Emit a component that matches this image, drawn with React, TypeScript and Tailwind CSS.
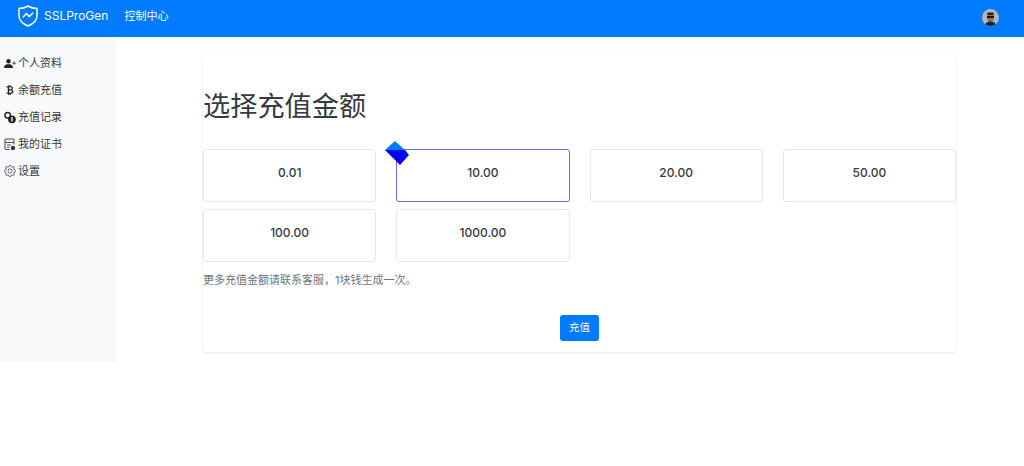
import React from "react";
import { BsCurrencyBitcoin, BsGear, BsPersonPlusFill } from "react-icons/bs";

function Shield() {
  return (
    <svg width="20" height="22" viewBox="0 0 20 22" fill="none" stroke="white" strokeWidth="1.5" strokeLinejoin="round" strokeLinecap="round">
      <path d="M10 1 C12.5 2.6 15.5 3.4 19 3.6 V10.5 C19 15.5 15 19 10 21 C5 19 1 15.5 1 10.5 V3.6 C4.5 3.4 7.5 2.6 10 1 Z" />
      <path d="M5.2 12 L8.4 8.6 L11.4 11.6 L14.8 8" />
    </svg>
  );
}

function Coins() {
  return (
    <svg width="13" height="13" viewBox="0 0 13 13">
      <circle cx="4" cy="4" r="3" fill="none" stroke="#212529" strokeWidth="1.6" />
      <circle cx="8.6" cy="8.4" r="4.2" fill="#212529" />
      <rect x="7.9" y="6" width="1.4" height="4.8" fill="#fff" />
    </svg>
  );
}

function Cert() {
  return (
    <svg width="12" height="13" viewBox="0 0 12 13" fill="none" stroke="#495057" strokeWidth="1.1">
      <rect x="1" y="1" width="9" height="3.5" rx="1" />
      <path d="M5.5 11.5 H2 A1 1 0 0 1 1 10.5 V4.5 M10 4.5 V6.5" />
      <path d="M3 7 H7 M3 9.2 H5.5" />
      <circle cx="9" cy="10" r="2.2" fill="#343a40" stroke="none" />
    </svg>
  );
}

function Avatar() {
  return (
    <svg width="17" height="17" viewBox="0 0 17 17">
      <defs>
        <clipPath id="av"><circle cx="8.5" cy="8.5" r="8.5" /></clipPath>
      </defs>
      <g clipPath="url(#av)">
        <rect width="17" height="17" fill="#b5b5b9" />
        <ellipse cx="8.5" cy="8.4" rx="3.6" ry="4.4" fill="#8a7367" />
        <rect x="5.2" y="3.4" width="6.6" height="2.6" rx="1.2" fill="#26262a" />
        <rect x="5" y="7" width="7" height="2" fill="#141416" />
        <path d="M3 17 C3 13.6 6 12.6 8.5 12.6 C11 12.6 14 13.6 14 17 Z" fill="#20212a" />
      </g>
    </svg>
  );
}

function Diamond() {
  return (
    <svg className="absolute left-[-12px] top-[-10px]" width="25" height="26" viewBox="0 0 25 26">
      <polygon points="0,10 10,1 20,10" fill="#007bff" />
      <polygon points="0,10 20,10 24,15 15,25" fill="#0000f0" />
    </svg>
  );
}

const menu: [React.ReactNode, string][] = [
  [<BsPersonPlusFill className="h-[13px] w-[13px] text-[#212529]" />, "个人资料"],
  [<BsCurrencyBitcoin className="h-[12px] w-[12px] text-[#212529]" />, "余额充值"],
  [<Coins />, "充值记录"],
  [<Cert />, "我的证书"],
  [<BsGear className="h-[12px] w-[12px] text-[#495057]" />, "设置"],
];

const amounts = ["0.01", "10.00", "20.00", "50.00", "100.00", "1000.00"];

export default function App() {
  return (
    <div className="min-h-[466px] bg-white font-['Inter','Noto_Sans_CJK_SC',sans-serif] text-[#212529]">
      <header className="flex h-[37px] items-center bg-[#007bff] pb-[6px] pl-[18px] pr-[25px] text-white">
        <Shield />
        <span className="ml-[6px] text-[12px] leading-none">SSLProGen</span>
        <span className="ml-[16px] mt-[2px] text-[11px] leading-none">控制中心</span>
        <span className="ml-auto mt-[3px] flex"><Avatar /></span>
      </header>
      <div className="flex">
        <aside className="flex h-[325px] w-[116px] shrink-0 flex-col gap-[9px] bg-[#f8f9fa] pl-[4px] pt-[17px]">
          {menu.map(([icon, label]) => (
            <div key={label} className="flex h-[18px] items-center gap-[2px] text-[11px] text-[#343a40]">
              <span className="flex w-[12px] justify-center">{icon}</span>
              <span>{label}</span>
            </div>
          ))}
        </aside>
        <main className="ml-[87px] mt-[18px] h-[297px] w-[753px] rounded-[4px] bg-white shadow-[0_1px_3px_rgba(0,0,0,0.1)]">
          <h1 className="mt-[34px] text-[27.2px] font-normal leading-[36px] text-[#343a40]">选择充值金额</h1>
          <div className="mt-[24px] grid grid-cols-4 gap-x-[20px] gap-y-[7px]">
            {amounts.map((a, i) => (
              <div
                key={a}
                className={
                  i === 1
                    ? "relative flex h-[53px] items-center justify-center rounded-[3px] border border-[#6a6af0] bg-white pb-[6px] text-[12px] font-medium text-[#343a40]"
                    : "flex h-[53px] items-center justify-center rounded-[3px] border border-[#e4e6e8] bg-white pb-[6px] text-[12px] font-medium text-[#343a40]"
                }
              >
                {a}
                {i === 1 && <Diamond />}
              </div>
            ))}
          </div>
          <p className="mt-[10px] text-[11px] leading-[16px] text-[#6c757d]">更多充值金额请联系客服，1块钱生成一次。</p>
          <div className="mt-[27px] flex justify-center">
            <button className="h-[26px] w-[39px] rounded-[3px] bg-[#007bff] text-[10.5px] text-white">充值</button>
          </div>
        </main>
      </div>
    </div>
  );
}
